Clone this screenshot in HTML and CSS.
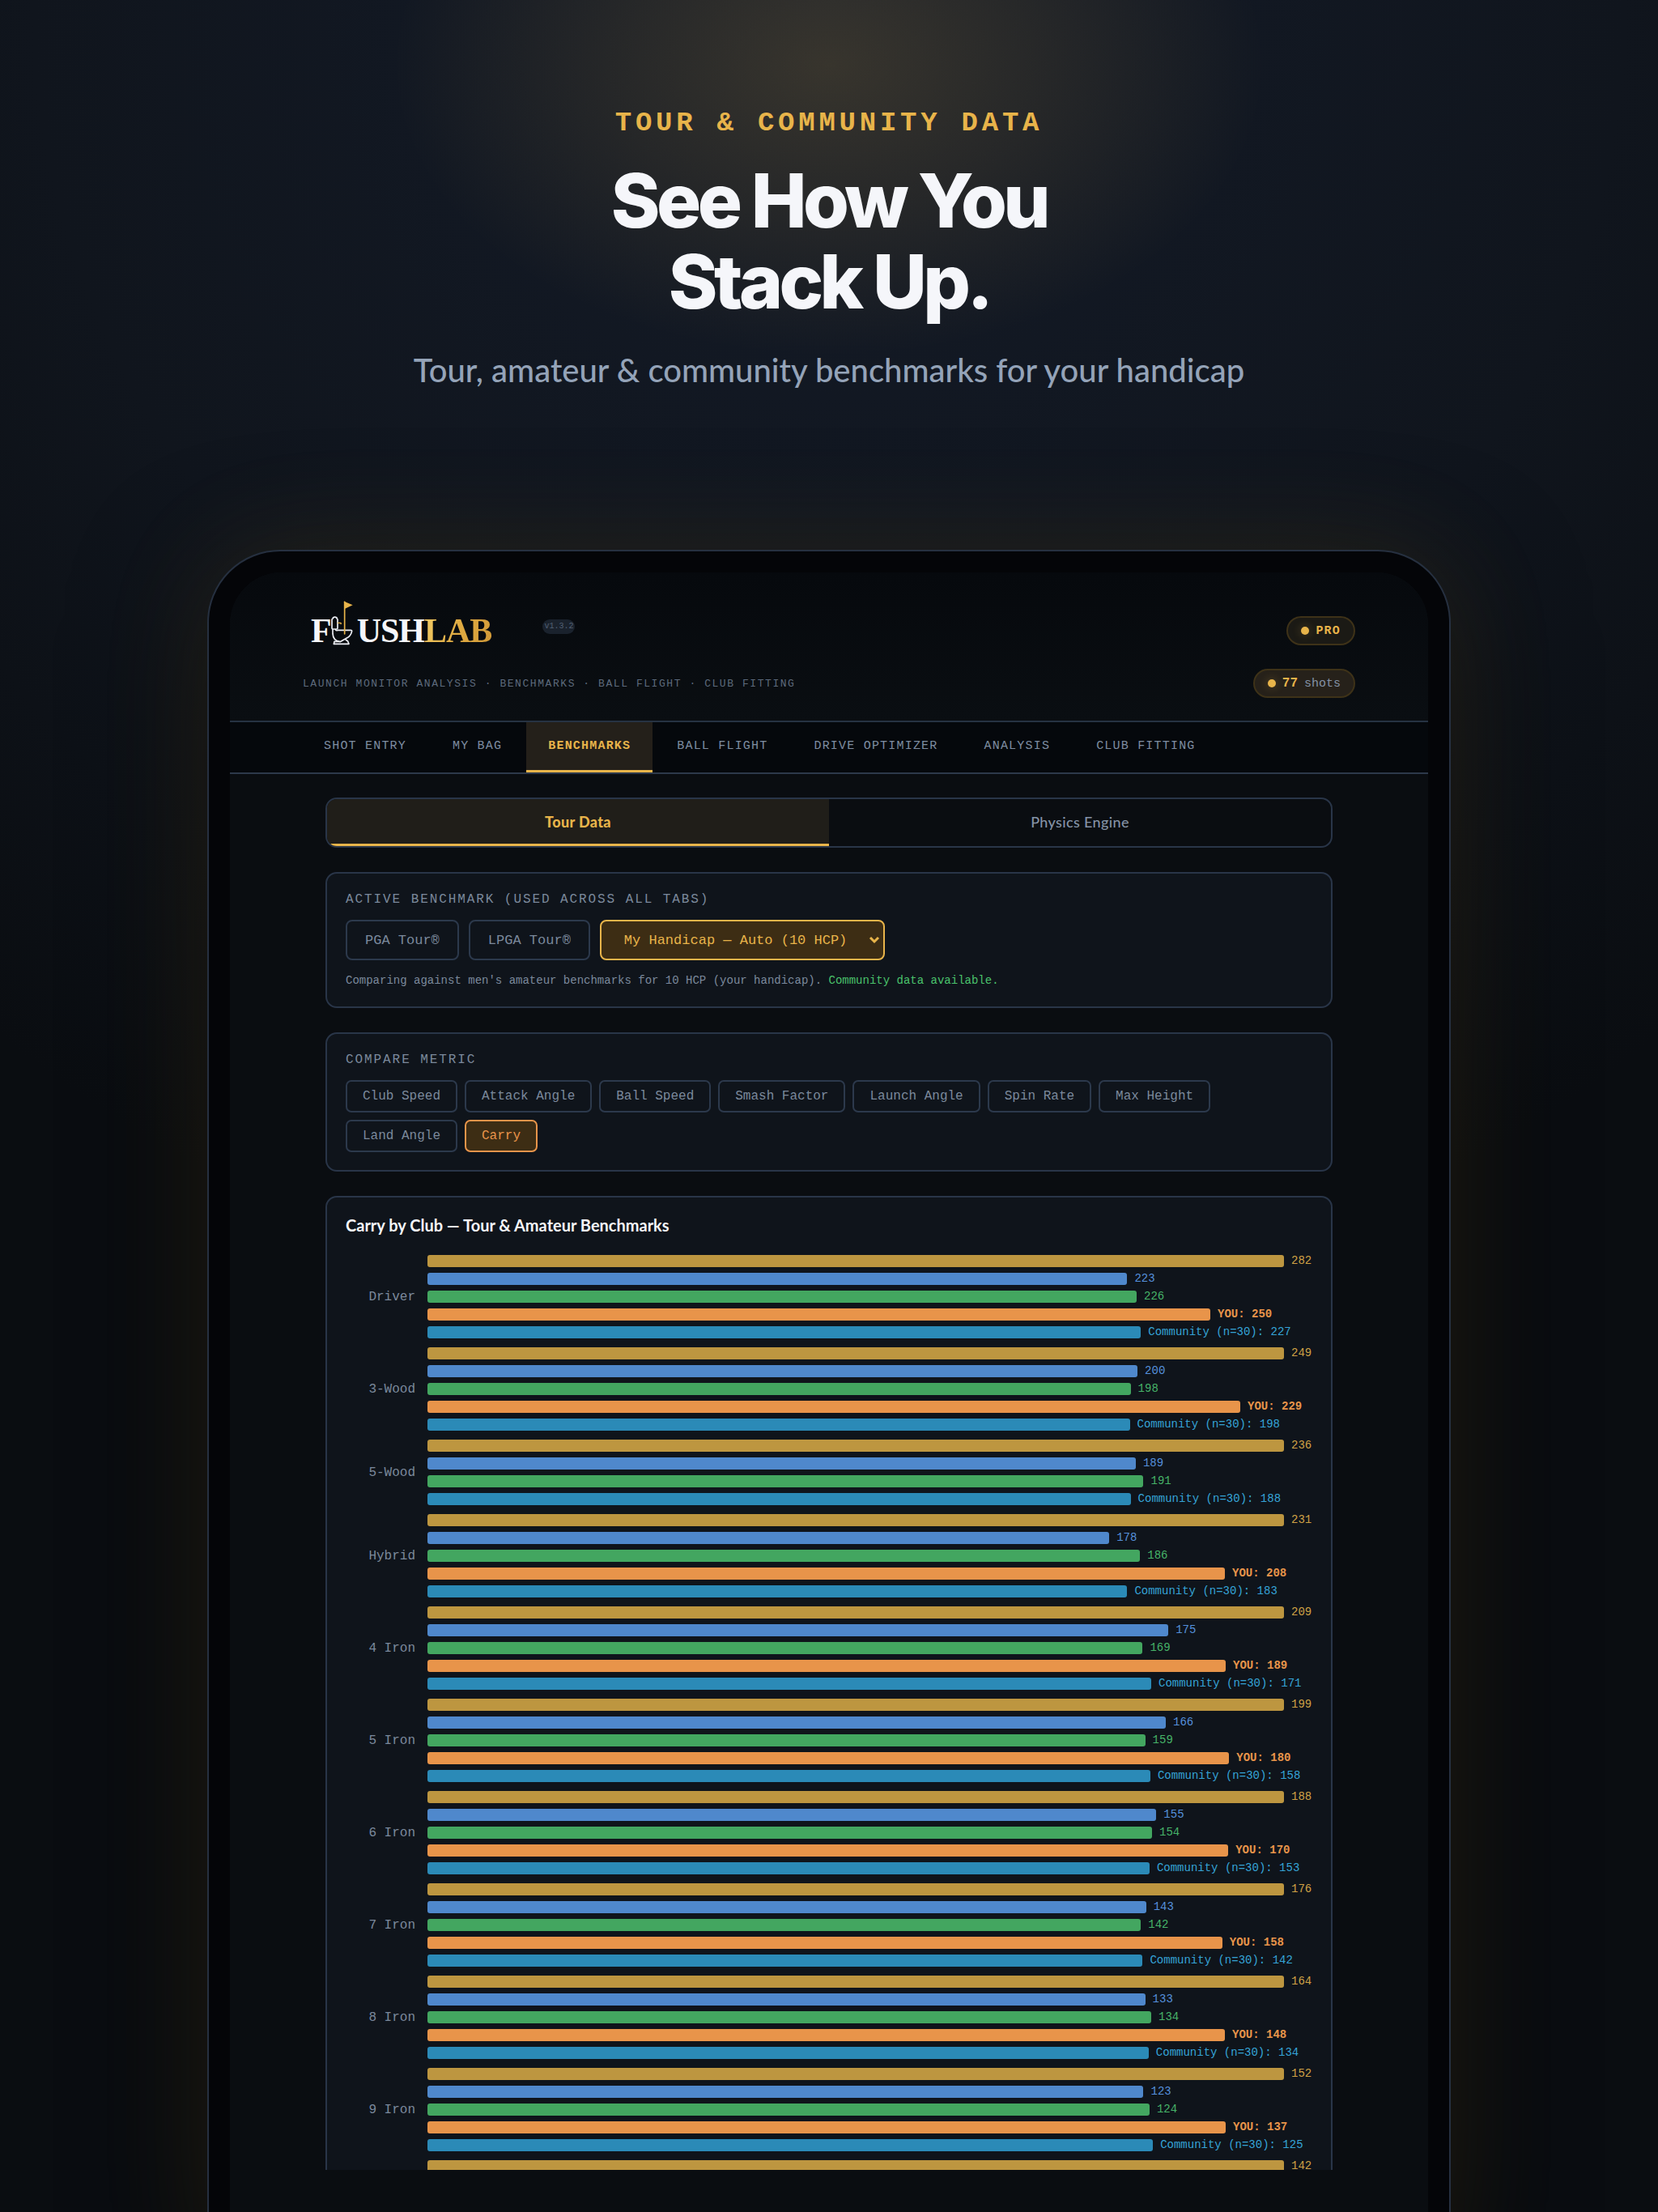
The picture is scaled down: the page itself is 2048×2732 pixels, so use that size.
FILE: index.html
```html
<!DOCTYPE html>
<html lang="en">
<head>
  <meta charset="UTF-8" />
  <meta name="viewport" content="width=device-width, initial-scale=1.0"/>
  <title>FlushLab - Benchmarks</title>
  <link rel="stylesheet" href="styles.css">
</head>
<body>

  <section class="hero">
    <p class="eyebrow">TOUR &amp; COMMUNITY DATA</p>
    <h1>See How You<br>Stack Up.</h1>
    <p class="subtitle">Tour, amateur &amp; community benchmarks for your handicap</p>
  </section>

  <div class="device">
    <div class="screen">
      <div class="app">

        <header class="header">
          <div class="header-row top">
            <div class="logo">
              <span class="logo-text">F</span>
              <svg class="logo-icon" viewBox="116 40 81 165" fill="none" aria-hidden="true">
                <g stroke="#eef0f6" stroke-width="5" stroke-linejoin="round" stroke-linecap="round">
                  <path d="M119 110 Q119 106 123 106 V103 Q130 98 137 103 V106 Q140 106 140 110 V142 Q140 145 136 145 H123 Q119 145 119 142 Z"/>
                  <path d="M122 147 V162 C123 180 133 190 149 192 L178 176 Q190 168 193 152 Q193 149 189 149 H140 Q136 152 132 147"/>
                  <path d="M128 191 L126 200 H182 L178 190 L170 184 M128 191 H146"/>
                </g>
                <path d="M141 122 H151 Q154 122 152 126" stroke="#e8b44a" stroke-width="4" stroke-linecap="round"/>
                <path d="M166 44 V163" stroke="#e8b44a" stroke-width="5" stroke-linecap="round"/>
                <path d="M164 42 L196 56 L166 70 Z" fill="#e8b44a"/>
              </svg>
              <span class="logo-text">USH</span><span class="logo-text gold">LAB</span>
            </div>
            <span class="version">v1.3.2</span>
            <span class="badge pro"><i class="dot"></i>PRO</span>
          </div>
          <div class="header-row">
            <p class="tagline">LAUNCH MONITOR ANALYSIS · BENCHMARKS · BALL FLIGHT · CLUB FITTING</p>
            <span class="badge shots"><i class="dot"></i><b>77</b> <span>shots</span></span>
          </div>
        </header>

        <nav class="nav">
          <a href="#shot-entry">SHOT ENTRY</a>
          <a href="#my-bag">MY BAG</a>
          <a href="#benchmarks" class="active">BENCHMARKS</a>
          <a href="#ball-flight">BALL FLIGHT</a>
          <a href="#drive-optimizer">DRIVE OPTIMIZER</a>
          <a href="#analysis">ANALYSIS</a>
          <a href="#club-fitting">CLUB FITTING</a>
        </nav>

        <main class="content">
          <div class="segmented">
            <button type="button" class="active">Tour Data</button>
            <button type="button">Physics Engine</button>
          </div>

          <section class="card">
            <label class="card-label" for="benchmark">ACTIVE BENCHMARK (USED ACROSS ALL TABS)</label>
            <div class="options">
              <button type="button" class="option">PGA Tour®</button>
              <button type="button" class="option">LPGA Tour®</button>
              <div class="select-wrap">
                <select id="benchmark">
                  <option>My Handicap — Auto (10 HCP)</option>
                </select>
                <svg class="chevron" viewBox="0 0 14 10" aria-hidden="true"><path d="M2 2 L7 7 L12 2" fill="none" stroke="#e8b44a" stroke-width="3"/></svg>
              </div>
            </div>
            <p class="note">Comparing against men's amateur benchmarks for 10 HCP (your handicap). <span>Community data available.</span></p>
          </section>

          <section class="card">
            <h2 class="card-label">COMPARE METRIC</h2>
            <div class="chips">
              <button type="button">Club Speed</button>
              <button type="button">Attack Angle</button>
              <button type="button">Ball Speed</button>
              <button type="button">Smash Factor</button>
              <button type="button">Launch Angle</button>
              <button type="button">Spin Rate</button>
              <button type="button">Max Height</button>
              <button type="button">Land Angle</button>
              <button type="button" class="active">Carry</button>
            </div>
          </section>

          <section class="card">
            <h2 class="chart-title">Carry by Club — Tour &amp; Amateur Benchmarks</h2>
            <div class="chart" id="chart"></div>
          </section>
        </main>

      </div>
    </div>
  </div>

  <script src="script.js"></script>
</body>
</html>
```

FILE: styles.css
```css
* {
  box-sizing: border-box;
}

body {
  margin: 0;
  height: 100vh;
  overflow: hidden;
  color: #f5f6fa;
  font-family: 'Liberation Mono', monospace;
  background:
    radial-gradient(ellipse 540px 360px at 50% 80px, rgba(232, 180, 74, 0.17), rgba(232, 180, 74, 0.09) 50%, transparent),
    radial-gradient(ellipse 80% 60% at 50% 0, #141b28, #10151d 60%, #0a0d11);
}

h1, h2, p {
  margin: 0;
}

button, select {
  font-family: inherit;
  cursor: pointer;
}

.hero {
  padding: 132px 40px 197px;
  text-align: center;
}

.eyebrow {
  font-size: 34px;
  line-height: 40px;
  font-weight: bold;
  letter-spacing: 0.14em;
  color: #e8b44a;
}

h1 {
  margin-top: 26px;
  font-family: Inter, sans-serif;
  font-size: 92px;
  line-height: 100px;
  font-weight: 800;
  letter-spacing: -0.05em;
}

.subtitle {
  margin-top: 34px;
  font-family: Lato, sans-serif;
  font-size: 40px;
  line-height: 50px;
  font-weight: 500;
  color: #94a3b8;
}

/* tablet frame */
.device {
  width: 75%;
  margin: 0 auto;
  padding: 26px;
  border: 2px solid #263040;
  border-radius: 90px;
  background: #040508;
  box-shadow: 0 0 140px rgba(232, 180, 74, 0.12), 0 40px 160px rgba(0, 0, 0, 0.6);
}

.screen {
  padding-bottom: 120px;
  border-radius: 64px;
  overflow: hidden;
  background: #0a0d11;
}

.app {
  aspect-ratio: 3 / 4;
  overflow: hidden;
}

.header {
  padding: 35px 90px 28px;
  border-bottom: 2px solid #263242;
  background: linear-gradient(#06090d, #0a0e12);
}

.header-row {
  display: flex;
  align-items: center;
  justify-content: space-between;
}

.header-row.top {
  align-items: flex-end;
  margin-bottom: 29px;
}

.logo {
  display: flex;
  align-items: flex-end;
  padding-left: 10px;
}

.logo-text {
  font-family: 'Liberation Serif', serif;
  font-size: 42px;
  line-height: 36px;
  font-weight: bold;
  letter-spacing: -1px;
}

.logo-text.gold {
  color: transparent;
  background: linear-gradient(110deg, #f2cc66, #e0ab42 50%, #d29a38);
  background-clip: text;
  -webkit-background-clip: text;
}

.logo-icon {
  width: 27px;
  height: 55px;
  margin-right: 5px;
}

.version {
  margin: 0 auto 14px 63px;
  padding: 0 2px;
  border-radius: 9px;
  font-size: 10px;
  line-height: 18px;
  color: #526073;
  background: #1a222d;
}

.tagline {
  font-size: 13px;
  letter-spacing: 0.12em;
  color: #5d6a7c;
}

.badge {
  display: flex;
  align-items: center;
  gap: 8px;
  height: 36px;
  padding: 0 16px;
  border: 2px solid #3e3218;
  border-radius: 18px;
  font-size: 15px;
  background: #1b1a15;
  color: #8492a6;
}

.badge.pro {
  font-weight: bold;
  letter-spacing: 0.08em;
  color: #e8b44a;
}

.badge.shots {
  background: #26211a;
}

.badge b {
  font-size: 16px;
  color: #e8b44a;
}

.dot {
  width: 10px;
  height: 10px;
  border-radius: 50%;
  background: #e8b44a;
  box-shadow: 0 0 12px rgba(232, 180, 74, 0.3);
}

.nav {
  display: flex;
  gap: 3px;
  padding: 0 89px;
  border-bottom: 2px solid #2d394b;
  background: #05080c;
}

.nav a {
  height: 62px;
  padding: 0 27px;
  border-bottom: 3px solid transparent;
  font-size: 15px;
  line-height: 60px;
  letter-spacing: 0.08em;
  text-decoration: none;
  white-space: nowrap;
  color: #7e8da1;
}

.nav a.active {
  border-color: #e8b44a;
  font-weight: bold;
  color: #e8b44a;
  background: #24201a;
}

.content {
  display: flex;
  flex-direction: column;
  gap: 30px;
  padding: 29px 118px;
}

.segmented {
  display: flex;
  height: 62px;
  border: 2px solid #293548;
  border-radius: 14px;
  overflow: hidden;
}

.segmented button {
  flex: 1;
  border: 0;
  border-bottom: 3px solid transparent;
  font-family: Lato, sans-serif;
  font-size: 18px;
  font-weight: 500;
  letter-spacing: 0.02em;
  color: #8492a6;
  background: transparent;
}

.segmented .active {
  border-color: #e8b44a;
  font-weight: 900;
  color: #e8b44a;
  background: #201e19;
}

.card {
  padding: 22px 23px;
  border: 2px solid #293548;
  border-radius: 14px;
  background: #0f141b;
}

.card-label {
  display: block;
  margin-bottom: 15px;
  font-size: 16px;
  line-height: 20px;
  font-weight: normal;
  letter-spacing: 0.12em;
  color: #7b899c;
}

.options {
  display: flex;
  gap: 12px;
  height: 50px;
}

.option, select {
  padding: 0 22px;
  border: 2px solid #2c394c;
  border-radius: 8px;
  font-size: 17px;
  color: #7b899c;
  background: transparent;
}

.select-wrap {
  position: relative;
  display: flex;
}

select {
  appearance: none;
  padding: 0 44px 0 28px;
  border-color: #e8b44a;
  color: #e8b44a;
  background: #3d2d14;
}

.chevron {
  position: absolute;
  top: 20px;
  right: 6px;
  width: 14px;
  height: 10px;
  pointer-events: none;
}

.note {
  margin-top: 15px;
  font-size: 14px;
  line-height: 20px;
  color: #7b899c;
}

.note span {
  color: #4ac26b;
}

.chips {
  display: flex;
  flex-wrap: wrap;
  gap: 9px;
}

.chips button {
  height: 40px;
  padding: 0 19px;
  border: 2px solid #2c394c;
  border-radius: 7px;
  font-size: 16px;
  color: #7b899c;
  background: transparent;
}

.chips .active {
  border-color: #e8944a;
  color: #e8944a;
  background: #3d2d14;
}

.chart-title {
  margin-bottom: 25px;
  font-family: Lato, sans-serif;
  font-size: 20px;
  line-height: 24px;
  font-weight: bold;
}

.chart {
  display: flex;
  flex-direction: column;
  gap: 11px;
}

.club {
  display: grid;
  grid-template-columns: 86px 1fr;
  gap: 15px;
  align-items: center;
}

.club-name {
  text-align: right;
  font-size: 16px;
  color: #7b899c;
}

.bars {
  display: flex;
  flex-direction: column;
  gap: 7px;
  padding-right: 35px;
}

.bar-row {
  display: flex;
  gap: 9px;
  height: 15px;
  font-size: 14px;
  line-height: 15px;
  white-space: nowrap;
}

.bar {
  flex: none;
  border-radius: 3px;
  background: currentColor;
}

.pga { color: #bd9640; }
.lpga { color: #4f88cc; }
.amateur { color: #43a660; }
.you { color: #e8944a; font-weight: bold; }
.community { color: #2b8ab7; }

.pga .value { color: #cfa145; }
.lpga .value { color: #5590dc; }
.amateur .value { color: #46b368; }
.community .value { color: #35a4d8; }
```

FILE: script.js
```js
// each bar: [series, value, width in %]
const clubs = [
  ["Driver", [["pga", 282, 100], ["lpga", 223, 81.7], ["amateur", 226, 82.8], ["you", 250, 91.4], ["community", 227, 83.3]]],
  ["3-Wood", [["pga", 249, 100], ["lpga", 200, 82.9], ["amateur", 198, 82.1], ["you", 229, 94.9], ["community", 198, 82]]],
  ["5-Wood", [["pga", 236, 100], ["lpga", 189, 82.7], ["amateur", 191, 83.6], ["community", 188, 82.1]]],
  ["Hybrid", [["pga", 231, 100], ["lpga", 178, 79.6], ["amateur", 186, 83.2], ["you", 208, 93.1], ["community", 183, 81.7]]],
  ["4 Iron", [["pga", 209, 100], ["lpga", 175, 86.5], ["amateur", 169, 83.5], ["you", 189, 93.2], ["community", 171, 84.5]]],
  ["5 Iron", [["pga", 199, 100], ["lpga", 166, 86.2], ["amateur", 159, 83.8], ["you", 180, 93.6], ["community", 158, 84.4]]],
  ["6 Iron", [["pga", 188, 100], ["lpga", 155, 85.1], ["amateur", 154, 84.6], ["you", 170, 93.5], ["community", 153, 84.3]]],
  ["7 Iron", [["pga", 176, 100], ["lpga", 143, 83.9], ["amateur", 142, 83.3], ["you", 158, 92.8], ["community", 142, 83.5]]],
  ["8 Iron", [["pga", 164, 100], ["lpga", 133, 83.8], ["amateur", 134, 84.5], ["you", 148, 93.1], ["community", 134, 84.2]]],
  ["9 Iron", [["pga", 152, 100], ["lpga", 123, 83.6], ["amateur", 124, 84.3], ["you", 137, 93.2], ["community", 125, 84.7]]],
  ["", [["pga", 142, 100]]]
];

const prefix = { you: "YOU: ", community: "Community (n=30): " };

document.getElementById("chart").innerHTML = clubs.map(([name, bars]) => `
  <div class="club">
    <span class="club-name">${name}</span>
    <div class="bars">
      ${bars.map(([series, value, width]) => `
        <div class="bar-row ${series}">
          <div class="bar" style="width:${width}%"></div>
          <span class="value">${prefix[series] || ""}${value}</span>
        </div>`).join("")}
    </div>
  </div>`).join("");
```
